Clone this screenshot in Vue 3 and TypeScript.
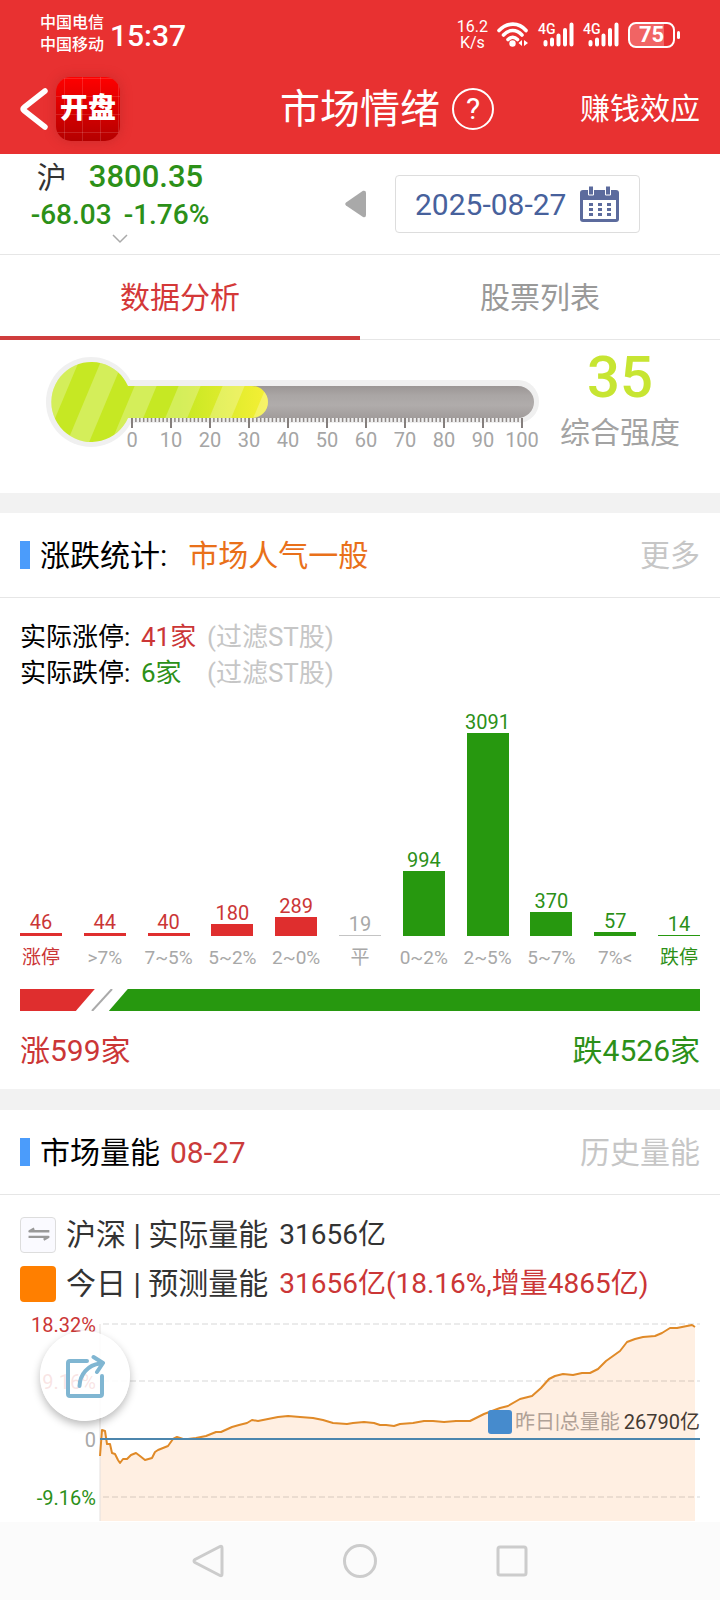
<script setup lang="ts">
import { computed, ref } from 'vue'

type Tone = 'up' | 'flat' | 'down'
interface Bucket {
  label: string
  count: number
  tone: Tone
  strong?: boolean
}

const tabs = ['数据分析', '股票列表']
const activeTab = ref(0)

const strength = 35
const scaleStart = 132
const scaleStep = 39
const scaleMarks = Array.from({ length: 11 }, (_, i) => i * 10)
const fineMarks = Array.from({ length: 100 }, (_, i) => scaleStart + (i * scaleStep) / 10)
const stripes = Array.from({ length: 6 }, (_, i) => 60 + i * 44)

const buckets: Bucket[] = [
  { label: '涨停', count: 46, tone: 'up', strong: true },
  { label: '>7%', count: 44, tone: 'up' },
  { label: '7~5%', count: 40, tone: 'up' },
  { label: '5~2%', count: 180, tone: 'up' },
  { label: '2~0%', count: 289, tone: 'up' },
  { label: '平', count: 19, tone: 'flat' },
  { label: '0~2%', count: 994, tone: 'down' },
  { label: '2~5%', count: 3091, tone: 'down' },
  { label: '5~7%', count: 370, tone: 'down' },
  { label: '7%<', count: 57, tone: 'down' },
  { label: '跌停', count: 14, tone: 'down', strong: true },
]
const tallest = Math.max(...buckets.map((b) => b.count))
const barHeight = (count: number) => Math.max(1, Math.round((count / tallest) * 203)) + 'px'

// Each pair is [distance from the axis, height above the zero line].
const series: [number, number][] = [
  [0, -17], [2, 9], [5, 8], [7, -5], [10, -5], [12, -14], [15, -15], [18, -21], [20, -24],
  [23, -20], [27, -20], [31, -16], [36, -14], [40, -17], [45, -21], [52, -19], [55, -13],
  [58, -11], [63, -9], [68, -7], [73, 0], [77, 2], [83, 0], [88, 0], [96, 1], [106, 3],
  [116, 7], [121, 7], [132, 12], [139, 14], [147, 16], [152, 19], [158, 18], [168, 20],
  [178, 22], [188, 23], [200, 22], [213, 21], [223, 19], [233, 16], [247, 15], [253, 16],
  [264, 17], [274, 16], [280, 14], [286, 14], [294, 13], [300, 15], [313, 16], [324, 18],
  [333, 18], [344, 17], [356, 18], [370, 18], [376, 21], [384, 25], [392, 28], [400, 31],
  [408, 33], [420, 40], [432, 43], [441, 51], [449, 60], [455, 63], [463, 65], [473, 64],
  [482, 66], [490, 66], [498, 70], [506, 78], [513, 83], [520, 88], [527, 97], [535, 100],
  [543, 102], [555, 103], [562, 106], [570, 111], [577, 111], [587, 113], [592, 114], [595, 112],
]
const zeroY = 130
const axisX = 80
const linePoints = computed(() => series.map(([x, v]) => `${axisX + x},${zeroY - v}`).join(' '))
const areaPoints = computed(() => `${axisX},212 ${linePoints.value} ${axisX + 595},212`)
const gridRows = [
  { y: 15, text: '18.32%', tone: 'up' },
  { y: 72, text: '9.16%', tone: 'up' },
  { y: 130, text: '0', tone: 'flat' },
  { y: 188, text: '-9.16%', tone: 'down' },
]
</script>

<template>
  <div class="screen">
    <header class="top">
      <div class="status">
        <div class="carriers"><span>中国电信</span><span>中国移动</span></div>
        <time class="clock">15:37</time>
        <div class="status-right">
          <div class="speed"><span>16.2</span><span>K/s</span></div>
          <svg class="wifi" viewBox="0 0 32 26" aria-hidden="true">
            <g fill="none" stroke="#fff" stroke-width="3.600" stroke-linecap="round">
              <path d="M2 8.500C10 0 22 0 29 8.500" />
              <path d="M6.500 13C12 7 19.500 7 25 13" />
              <path d="M11 17.500C14 14.500 17.500 14.500 20.500 17.500" />
            </g>
            <circle cx="15.500" cy="21.500" r="3.200" fill="#fff" />
            <path d="M25 18v6l-3.500-3zM27 18v6l4-3z" fill="#fff" />
          </svg>
          <div v-for="n in 2" :key="n" class="signal">
            <span>4G</span>
            <svg viewBox="0 0 36 26" aria-hidden="true">
              <path d="M7.500 20v2.500M14 17.500v5M20.500 13.500v9M27 8v14.500M33.500 2.500v20" fill="none" stroke="#fff" stroke-width="4" stroke-linecap="round" />
            </svg>
          </div>
          <div class="battery"><span>75</span></div>
        </div>
      </div>

      <div class="titlebar">
        <div class="title-side">
          <button class="back" type="button" aria-label="返回">
            <svg viewBox="0 0 30 44"><path d="M25 4 4 20.500Q2 22 4 23.500L25 40" fill="none" stroke="#fff" stroke-width="5.500" stroke-linecap="round" /></svg>
          </button>
          <div class="logo">开盘</div>
        </div>
        <h1>市场情绪</h1>
        <div class="title-side">
          <button class="help" type="button" aria-label="帮助">?</button>
          <a class="effect" href="#effect">赚钱效应</a>
        </div>
      </div>
    </header>

    <section class="quote">
      <button class="index" type="button">
        <span class="index-main"><span class="market">沪</span><b>3800.35</b></span>
        <span class="index-diff"><span>-68.03</span><span>-1.76%</span></span>
        <svg class="chevron" viewBox="0 0 16 10" aria-hidden="true"><path d="M1 1l7 7 7-7" fill="none" stroke="#aaa" stroke-width="1.500" /></svg>
      </button>
      <button class="prev" type="button" aria-label="前一天">
        <svg viewBox="0 0 22 28"><path d="M1 12.500 18 .8Q21 0 21 3v22q0 3-3 2L1 15.500Q-.5 14 1 12.500" fill="#a9a9a9" /></svg>
      </button>
      <button class="date" type="button">
        <span>2025-08-27</span>
        <svg viewBox="0 0 40 37" aria-hidden="true">
          <rect y="4" width="39" height="32" rx="3" fill="#5c6b9d" />
          <rect x="3" y="14" width="33" height="19" fill="#fff" />
          <path d="M8.500 0h5v9h-5zM25.500 0h5v9h-5z" fill="#5c6b9d" stroke="#fff" />
          <path d="M9 18.500h22M9 23.500h22M9 28.500h22" stroke="#5c6b9d" stroke-width="3" stroke-dasharray="4 5" />
        </svg>
      </button>
    </section>

    <nav class="tabs">
      <button v-for="(tab, i) in tabs" :key="tab" type="button" :class="{ active: activeTab === i }" @click="activeTab = i">{{ tab }}</button>
    </nav>

    <section class="gauge">
      <svg class="thermo" viewBox="0 0 540 152" role="img" aria-label="综合强度">
        <defs>
          <linearGradient id="tube" x1="0" y1="0" x2="0" y2="1">
            <stop offset="0" stop-color="#9b9695" /><stop offset=".3" stop-color="#aaa6a5" /><stop offset=".6" stop-color="#b0acab" /><stop offset="1" stop-color="#a19c9b" />
          </linearGradient>
          <linearGradient id="fluid" gradientUnits="userSpaceOnUse" x1="180" y1="0" x2="268" y2="0">
            <stop offset="0" stop-color="#c6e823" /><stop offset="1" stop-color="#f5ef35" />
          </linearGradient>
          <clipPath id="fluid-shape">
            <path d="M128 46H252a16 16 0 0 1 0 32H128A40 40 0 1 1 128 46Z" />
          </clipPath>
        </defs>
        <g fill="#f0f0f0">
          <circle cx="91" cy="62" r="45" />
          <rect x="91" y="40" width="448" height="43" rx="21" />
        </g>
        <rect x="100" y="46" width="434" height="32" rx="16" fill="url(#tube)" />
        <g clip-path="url(#fluid-shape)">
          <rect x="50" y="20" width="220" height="84" fill="url(#fluid)" />
          <path v-for="x in stripes" :key="x" :d="`M${x} 14h22l-41 98h-22z`" fill="#fff" opacity=".25" />
        </g>
        <path v-for="x in fineMarks" :key="'f' + x" :d="`M${x} 78v4`" stroke="#8f8987" stroke-width="1.500" />
        <g v-for="(m, i) in scaleMarks" :key="m">
          <path :d="`M${scaleStart + i * scaleStep} 78v10`" stroke="#857f7d" stroke-width="2" />
          <text :x="scaleStart + i * scaleStep" y="107">{{ m }}</text>
        </g>
      </svg>
      <div class="score"><strong>{{ strength }}</strong><span>综合强度</span></div>
    </section>

    <section class="panel">
      <header class="panel-head">
        <h2>涨跌统计:</h2><span class="mood">市场人气一般</span>
        <a href="#more">更多</a>
      </header>
      <div class="stats">
        <p><span>实际涨停:</span><b class="up">41家</b><em>(过滤ST股)</em></p>
        <p><span>实际跌停:</span><b class="down">6家</b><em>(过滤ST股)</em></p>
      </div>
      <div class="bars">
        <div v-for="b in buckets" :key="b.label" class="bucket" :class="b.tone">
          <span class="count">{{ b.count }}</span>
          <div class="bar" :style="{ height: barHeight(b.count) }"></div>
          <span class="range" :class="{ strong: b.strong }">{{ b.label }}</span>
        </div>
      </div>
      <div class="ratio">
        <div class="ratio-up"></div>
        <svg viewBox="0 0 22 22" aria-hidden="true"><path d="M1 22 21 0" stroke="#aaa" stroke-width="2" /></svg>
        <div class="ratio-down"></div>
      </div>
      <div class="totals"><span class="up">涨599家</span><span class="down">跌4526家</span></div>
    </section>

    <section class="panel volume">
      <header class="panel-head">
        <h2>市场量能</h2><span class="day">08-27</span>
        <a href="#history">历史量能</a>
      </header>
      <div class="legend">
        <p>
          <button class="swap" type="button" aria-label="切换市场">
            <svg viewBox="0 0 36 36"><path d="M30 14H9l5-3M8 20h21l-5 3" fill="none" stroke="#999" stroke-width="2.500" stroke-linejoin="round" /></svg>
          </button>
          <span>沪深 | 实际量能</span><b>31656亿</b>
        </p>
        <p><i class="swatch"></i><span>今日 | 预测量能</span><b class="up">31656亿(18.16%,增量4865亿)</b></p>
      </div>
      <div class="plot">
        <svg viewBox="0 0 680 212" role="img" aria-label="市场量能">
          <polygon :points="areaPoints" fill="#ffefe2" />
          <path d="M80 15v197" stroke="#e4e0de" stroke-width="1" />
          <g v-for="g in gridRows" :key="g.y">
            <path v-if="g.tone !== 'flat'" :d="`M83 ${g.y}H680`" stroke="#000" stroke-opacity=".08" stroke-width="2" stroke-dasharray="6 3" />
            <text x="76" :y="g.y + 8" :class="g.tone">{{ g.text }}</text>
          </g>
          <polyline :points="linePoints" fill="none" stroke="#e08a28" stroke-width="2" stroke-linejoin="round" />
          <path d="M80 130h600" stroke="#4c86ad" stroke-width="2" />
        </svg>
        <p class="yesterday"><i></i><span>昨日|总量能</span><b>26790亿</b></p>
        <button class="share" type="button" aria-label="分享">
          <svg viewBox="0 0 40 44" fill="none" stroke="#80b6d2" stroke-width="4" stroke-linecap="round" stroke-linejoin="round">
            <path d="M22 7H5Q3 7 3 9v31q0 2 2 2h30q2 0 2-2V22" /><path d="M14.500 32C15 20 23 11 35 9.500" /><path d="M28.500 3 38 9 32 18" />
          </svg>
        </button>
      </div>
    </section>

    <footer class="system">
      <button type="button" aria-label="后退"><svg viewBox="0 0 34 34"><path d="M29 2.500Q31 1.500 31 4v26q0 2.500-2 1.500L4 18.500q-2-1.500 0-3z" /></svg></button>
      <button type="button" aria-label="主页"><svg viewBox="0 0 34 34"><circle cx="17" cy="17" r="15.500" /></svg></button>
      <button type="button" aria-label="最近任务"><svg viewBox="0 0 34 34"><rect x="3" y="3" width="28" height="28" rx="2" /></svg></button>
    </footer>
  </div>
</template>

<style>
body { margin: 0; background: #fff; }
</style>

<style scoped>
* { box-sizing: border-box; }
.screen {
  min-height: 100vh;
  display: flex;
  flex-direction: column;
  background: #fff;
  color: #333;
  font-family: Roboto, "Noto Sans CJK SC", sans-serif;
  overflow: hidden;
}
button { padding: 0; border: 0; background: none; font: inherit; color: inherit; cursor: pointer; }
svg { display: block; }
a { text-decoration: none; color: inherit; }
h1, h2, p { margin: 0; font-weight: 400; }
b { font-weight: 400; }
.up { color: #cb3636; fill: #cb3636; }
.down { color: #2c9018; fill: #2c9018; }
.flat { color: #a8a8a8; fill: #a8a8a8; }

.top { background: #e83131; color: #fff; }
.status { height: 70px; padding: 0 40px; display: flex; align-items: center; }
.carriers { display: flex; flex-direction: column; font-size: 16px; line-height: 22px; padding-bottom: 2px; font-weight: 500; }
.clock { margin-left: 6px; font-size: 30px; font-weight: 500; }
.status-right { margin-left: auto; display: flex; align-items: center; gap: 9px; }
.speed { display: flex; flex-direction: column; align-items: center; font-size: 16px; line-height: 16px; }
.wifi { width: 32px; height: 26px; }
.signal { position: relative; width: 36px; height: 26px; }
.signal svg { width: 36px; height: 26px; }
.signal span { position: absolute; left: 0; top: 0; font-size: 14px; line-height: 14px; font-weight: 500; }
.battery {
  position: relative; width: 47px; height: 26px; margin-right: 5px; border: 2px solid #fff; border-radius: 8px;
  background: linear-gradient(90deg, #f16464 80%, transparent 80%);
  display: flex; align-items: center; justify-content: center; font-size: 22px; line-height: 22px; font-weight: 700;
}
.battery::after { content: ""; position: absolute; right: -7px; top: 7px; width: 3px; height: 8px; border-radius: 2px; background: #fff; }

.titlebar { height: 84px; padding: 0 20px 6px; display: grid; grid-template-columns: 1fr auto 1fr; align-items: center; }
.title-side { display: flex; align-items: center; }
.titlebar .back { width: 30px; height: 44px; }
.logo {
  width: 64px; height: 64px; margin-left: 6px; border-radius: 15px; display: flex; align-items: center; justify-content: center;
  background:
    repeating-linear-gradient(90deg, transparent 0 8px, #ffffff22 8px 9px, transparent 9px 18px),
    repeating-linear-gradient(0deg, transparent 0 8px, #ffffff22 8px 9px, transparent 9px 18px),
    linear-gradient(#ff0000, #b40000);
  box-shadow: 0 0 12px #a0202066; font-size: 28px; line-height: 64px; font-weight: 900;
}
.titlebar h1 { padding-top: 2px; font-size: 40px; line-height: 60px; }
.help { width: 42px; height: 42px; margin-left: 12px; border: 2px solid #fff; border-radius: 50%; font-size: 30px; line-height: 38px; }
.effect { margin-left: auto; font-size: 30px; line-height: 44px; }

.quote { height: 101px; display: flex; align-items: center; border-bottom: 1px solid #e6e6e6; }
.index { width: 240px; height: 100px; display: flex; flex-direction: column; align-items: center; padding-top: 4px; color: #2c9018; }
.index-main { display: flex; align-items: center; gap: 22px; font-size: 31px; line-height: 38px; }
.index-main b { font-weight: 500; }
.market { padding-top: 2px; color: #333; font-size: 30px; line-height: 36px; }
.index-diff { display: flex; gap: 12px; font-size: 28px; line-height: 38px; font-weight: 500; }
.chevron { width: 16px; height: 10px; }
.prev { width: 22px; margin-left: 105px; }
.date { height: 58px; margin-left: 28px; padding: 0 19px; display: flex; align-items: center; gap: 14px; border: 1px solid #ddd; border-radius: 4px; color: #47619c; font-size: 30px; }
.date svg { width: 40px; height: 37px; }

.tabs { display: grid; grid-template-columns: 1fr 1fr; }
.tabs button { display: flex; justify-content: center; height: 85px; padding-top: 21px; border-bottom: 1px solid #e6e6e6; color: #999; font-size: 30px; line-height: 44px; }
.tabs .active { color: #d43838; border-bottom: 4px solid #cf3d3d; }

.gauge { display: flex; height: 153px; }
.thermo { width: 75%; height: 152px; }
.thermo text { fill: #a5a5a5; font-size: 20px; text-anchor: middle; }
.score { flex: 1; padding: 6px 20px 0 0; display: flex; flex-direction: column; align-items: center; }
.score strong { color: #c7e532; font-size: 58px; line-height: 62px; font-weight: 500; }
.score span { color: #a3a3a3; font-size: 30px; line-height: 50px; white-space: nowrap; }

.panel { border-top: 20px solid #f2f2f2; }
.panel-head { height: 85px; padding: 0 20px; display: flex; align-items: center; border-bottom: 1px solid #e6e6e6; font-size: 30px; line-height: 44px; }
.panel-head > * { padding-top: 2px; }
.panel-head::before { content: ""; width: 10px; height: 28px; margin-right: 10px; background: #4b9cfb; }
.panel-head h2 { font-size: 30px; color: #000; }
.panel-head a { margin-left: auto; color: #c6c6c6; }
.mood { margin-left: 21px; color: #e9701a; }
.day { margin-left: 10px; color: #cb3b3b; }

.stats { padding: 21px 20px 0; color: #000; font-size: 26px; line-height: 36px; }
.stats p { display: grid; grid-template-columns: 121px 66px 1fr; }
.stats em { font-style: normal; color: #c6c6c6; }
.bars { padding: 0 20px; display: flex; justify-content: space-between; align-items: flex-end; height: 279px; }
.bucket { width: 42px; display: flex; flex-direction: column; align-items: center; font-size: 20px; }
.count { line-height: 22px; }
.bar { width: 100%; background: #c4c4c4; }
.up .bar { background: #df2e2e; }
.down .bar { background: #27980f; }
.range { margin-top: 10px; line-height: 24px; font-size: 19px; color: #a8a8a8; white-space: nowrap; }
.range.strong { color: inherit; }
.ratio { height: 22px; margin: 19px 20px 0; display: flex; }
.ratio-up { width: 11%; background: #df2e2e; clip-path: polygon(0 0, 100% 0, calc(100% - 19px) 100%, 0 100%); }
.ratio svg { width: 22px; height: 22px; margin: 0 -4px; }
.ratio-down { flex: 1; background: #27980f; clip-path: polygon(19px 0, 100% 0, 100% 100%, 0 100%); }
.totals { display: flex; justify-content: space-between; padding: 20px 20px 18px; font-size: 30px; line-height: 40px; }

.volume { flex: 1; border-top-width: 21px; }
.legend { padding: 15px 20px 1px; font-size: 30px; line-height: 49px; }
.legend p { display: flex; align-items: center; white-space: nowrap; }
.legend b { margin-left: 11px; font-size: 28px; }
.swap, .swatch { width: 36px; height: 36px; margin-right: 10px; border-radius: 4px; }
.swap { border: 1px solid #ddd; background: #fafaff; }
.swatch { background: #ff7f00; }
.plot { position: relative; margin: 0 20px; }
.plot text { font-size: 20px; text-anchor: end; }
.yesterday { position: absolute; right: 0; bottom: 85px; display: flex; align-items: center; font-size: 20px; line-height: 28px; color: #b0a196; }
.yesterday i { width: 24px; height: 24px; margin-right: 3px; border-radius: 3px; background: #468bcd; }
.yesterday b { margin-left: 4px; color: #443a33; }
.share {
  position: absolute; left: 20px; top: 22px; width: 90px; height: 90px; border-radius: 50%;
  display: flex; align-items: center; justify-content: center; background: #ffffffdd; box-shadow: 0 4px 8px #00000045;
}
.share svg { width: 40px; height: 44px; }

.system { height: 78px; display: flex; align-items: center; justify-content: center; gap: 118px; background: #fbfbfb; }
.system svg { width: 34px; height: 34px; fill: none; stroke: #ccc; stroke-width: 3; }
</style>
